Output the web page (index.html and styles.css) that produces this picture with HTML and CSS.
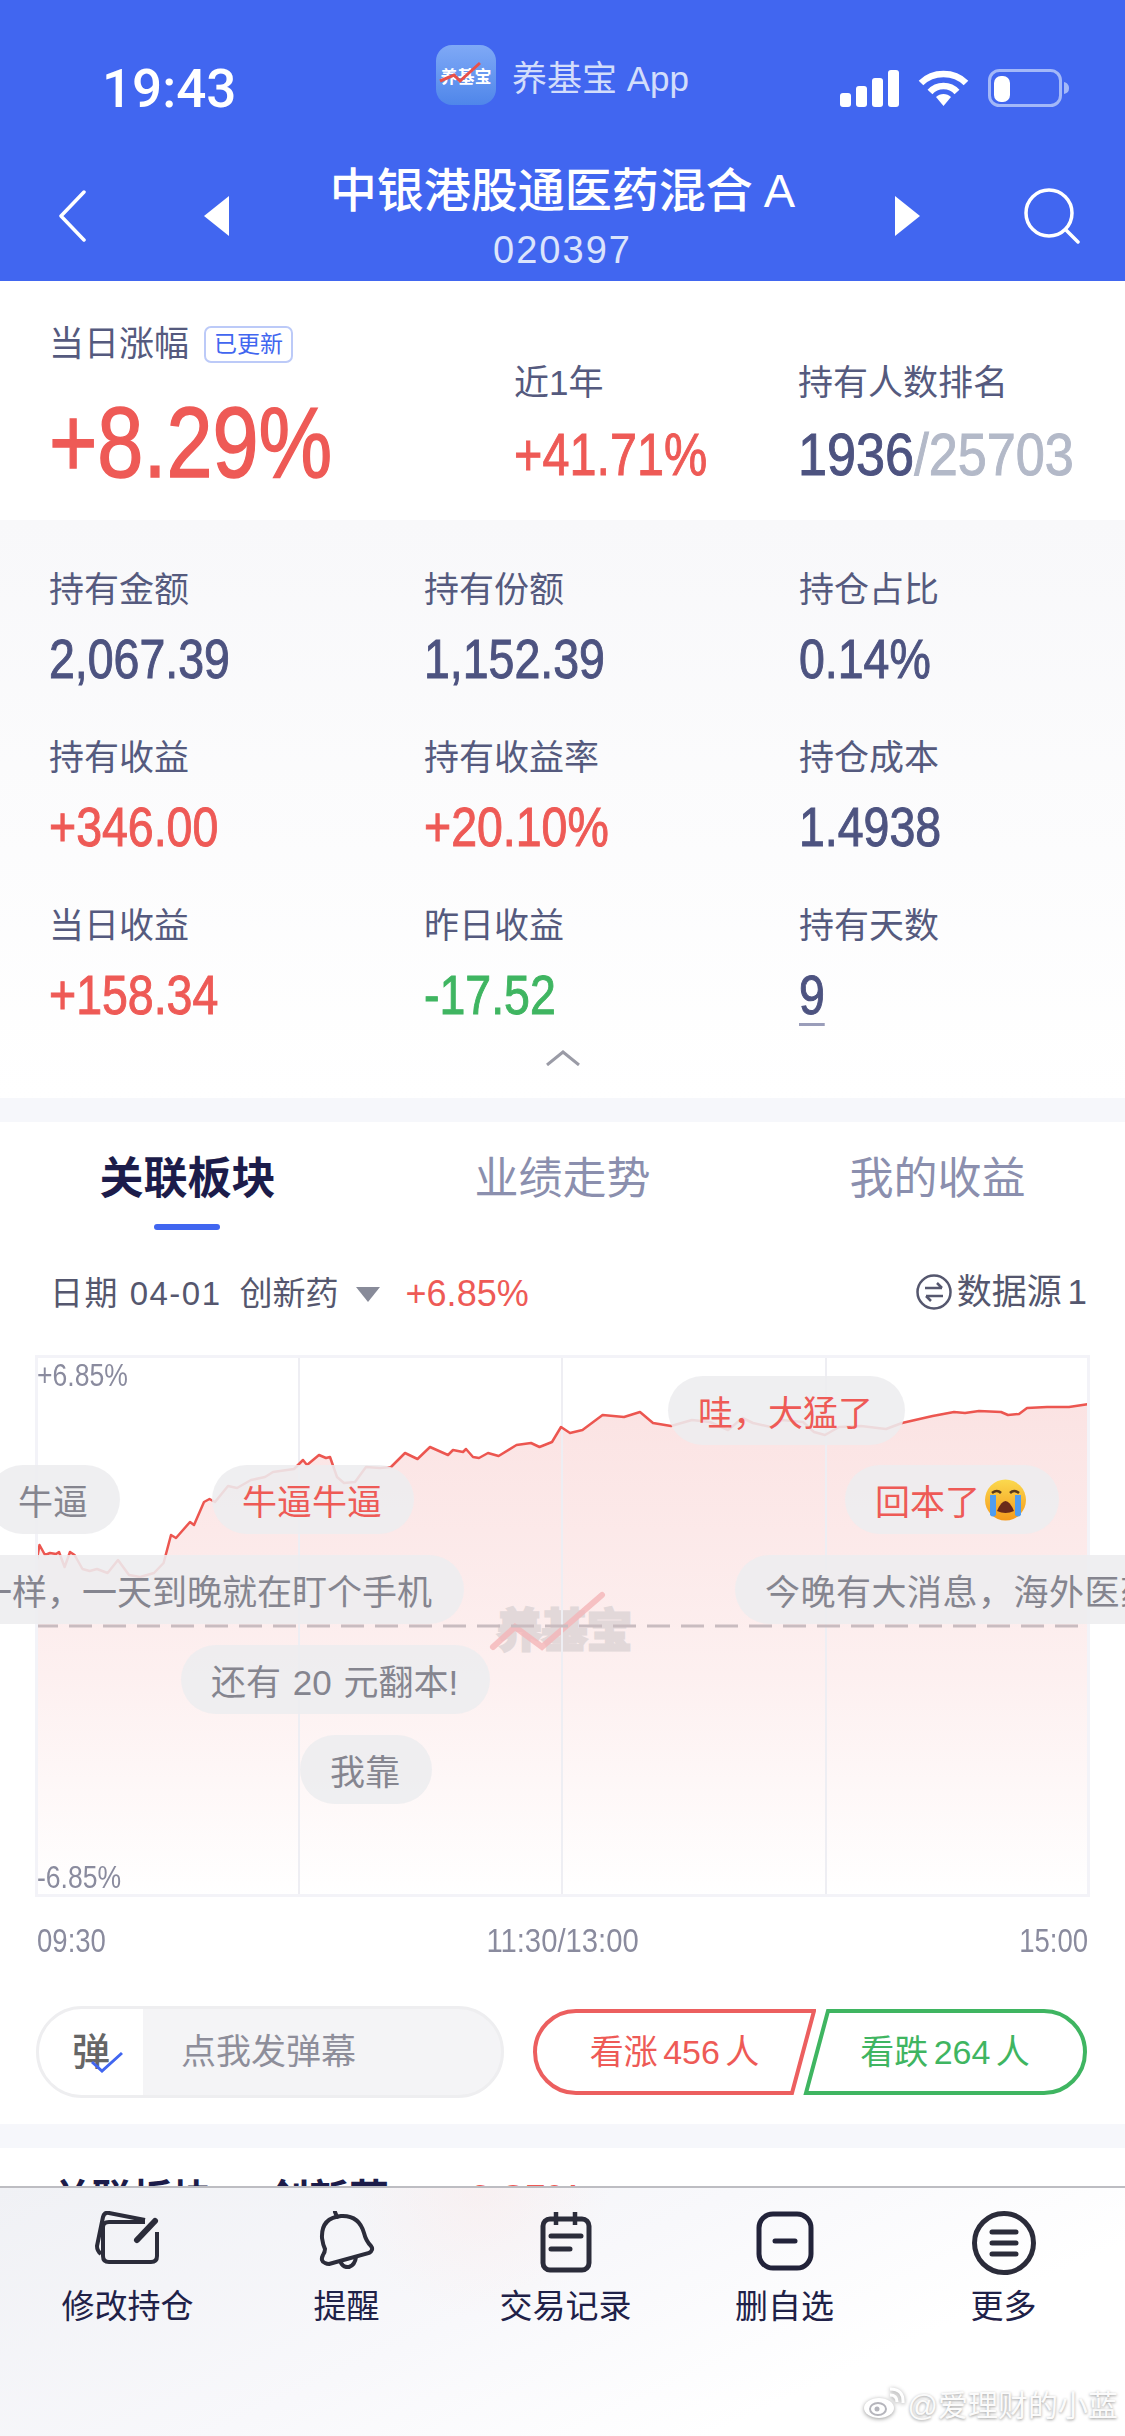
FILE: index.html
```html
<!DOCTYPE html>
<html lang="zh-CN">
<head>
    <meta charset="UTF-8">
    <meta name="viewport" content="width=device-width, initial-scale=1.0">
    <title>中银港股通医药混合 A</title>
    <link rel="stylesheet" href="styles.css">
</head>
<body>
<div class="page">
    <header class="header">
        <div class="status">
            <div class="time">19:43</div>
            <div class="app">
                <div class="app-logo">
                    <span>养基宝</span>
                    <svg class="app-slash" width="60" height="60" viewBox="0 0 60 60"><path d="M4 36 L18 30 L24 36 L44 18" fill="none" stroke="#e8504a" stroke-width="3"/></svg>
                </div>
                <div class="app-name">养基宝 App</div>
            </div>
            <div class="status-icons">
                <svg width="59" height="37" viewBox="0 0 59 37"><rect x="0" y="23" width="11" height="14" rx="3" fill="#fff"/><rect x="16" y="16" width="11" height="21" rx="3" fill="#fff"/><rect x="32" y="8" width="11" height="29" rx="3" fill="#fff"/><rect x="48" y="0" width="11" height="37" rx="3" fill="#fff"/></svg>
                <svg width="51" height="37" viewBox="0 0 51 37"><path d="M3 13 C15 1 36 1 48 13" fill="none" stroke="#fff" stroke-width="6.500"/><path d="M12 22 C19 14 32 14 39 22" fill="none" stroke="#fff" stroke-width="6.500"/><path d="M18 27 C22 23 29 23 33 27 L25.500 36 Z" fill="#fff"/></svg>
                <svg width="81" height="38" viewBox="0 0 81 38"><rect x="1.500" y="1.500" width="71" height="35" rx="10" fill="none" stroke="#a3b8f8" stroke-width="3"/><rect x="6" y="7" width="16" height="26" rx="7" fill="#fff"/><path d="M76 13 C80 14 81 17 81 19 C81 22 80 24 76 25 Z" fill="#a3b8f8"/></svg>
            </div>
        </div>
        <div class="nav">
            <div class="nav-side">
                <svg class="nav-back" width="30" height="52" viewBox="0 0 30 52"><path d="M27 2 L4 26 L27 50" fill="none" stroke="#fff" stroke-width="3.500" stroke-linecap="round" stroke-linejoin="round"/></svg>
                <svg width="25" height="40" viewBox="0 0 25 40"><path d="M25 0 V40 L0 20 Z" fill="#fff"/></svg>
            </div>
            <div class="nav-title">
                <div class="fund-name">中银港股通医药混合 A</div>
                <div class="fund-code">020397</div>
            </div>
            <div class="nav-side nav-side-right">
                <svg width="25" height="40" viewBox="0 0 25 40"><path d="M0 0 V40 L25 20 Z" fill="#fff"/></svg>
                <svg width="56" height="56" viewBox="0 0 56 56"><circle cx="25" cy="25" r="23" fill="none" stroke="#fff" stroke-width="3.500"/><path d="M42 42 L54 54" fill="none" stroke="#fff" stroke-width="3.500" stroke-linecap="round"/></svg>
            </div>
        </div>
    </header>

    <section class="summary">
        <div class="summary-main">
            <div class="label">当日涨幅<span class="tag">已更新</span></div>
            <div class="num big red">+8.29%</div>
        </div>
        <div class="summary-year">
            <div class="label">近1年</div>
            <div class="num mid red">+41.71%</div>
        </div>
        <div class="summary-rank">
            <div class="label">持有人数排名</div>
            <div class="num mid rank">1936<span class="rank-total">/25703</span></div>
        </div>
    </section>

    <section class="stats">
        <div class="stats-grid">
            <div><div class="label">持有金额</div><div class="num val">2,067.39</div></div>
            <div><div class="label">持有份额</div><div class="num val">1,152.39</div></div>
            <div><div class="label">持仓占比</div><div class="num val">0.14%</div></div>
            <div><div class="label">持有收益</div><div class="num val red">+346.00</div></div>
            <div><div class="label">持有收益率</div><div class="num val red">+20.10%</div></div>
            <div><div class="label">持仓成本</div><div class="num val">1.4938</div></div>
            <div><div class="label">当日收益</div><div class="num val red">+158.34</div></div>
            <div><div class="label">昨日收益</div><div class="num val green">-17.52</div></div>
            <div><div class="label">持有天数</div><div class="num val"><span class="days">9</span></div></div>
        </div>
        <svg class="collapse" width="36" height="16" viewBox="0 0 36 16"><path d="M2 15 L18 2 L34 15" fill="none" stroke="#9a9ba6" stroke-width="3"/></svg>
    </section>

    <div class="band"></div>

    <section class="board">
        <div class="tabs">
            <div class="tab tab-on">关联板块</div>
            <div class="tab">业绩走势</div>
            <div class="tab">我的收益</div>
        </div>
        <div class="filter">
            <span class="filter-date">日期 04-01</span>
            <span class="filter-name">创新药</span>
            <span class="filter-arrow"></span>
            <span class="filter-pct">+6.85%</span>
            <span class="source">
                <svg width="36" height="36" viewBox="0 0 36 36"><circle cx="18" cy="18" r="16.500" fill="none" stroke="#55576e" stroke-width="2.500"/><path d="M9 14 H26 M21 9 L26 14 M27 22 H10 M15 27 L10 22" fill="none" stroke="#55576e" stroke-width="2.500"/></svg>
                数据源 1
            </span>
        </div>
        <div class="chart-wrap">
            <div class="chart">
                <svg width="1055" height="542" viewBox="0 0 1055 542">
                    <defs>
                        <linearGradient id="area" x1="0" y1="0" x2="0" y2="1">
                            <stop offset="0" stop-color="#fbe3e3"/>
                            <stop offset="0.55" stop-color="#fdf0f0"/>
                            <stop offset="1" stop-color="#ffffff"/>
                        </linearGradient>
                    </defs>
                    <path fill="url(#area)" d="M0 542 L0 215 L4.500 190 L10 200 L15 198 L21 199 L24 197 L29.600 212 L35 197 L39.600 200 L47.500 214 L54.700 216 L62 214 L72.600 218 L83 205 L94 220 L105 222 L119 218 L128.600 208 L136 180 L141 183 L155 167 L159 170 L169 147 L174.500 144 L180 147 L193 131 L202 133 L216 125 L230 122 L238 117 L259 114 L268 105 L272 110 L284 100 L291 103 L295 102 L302 122 L309 128 L320 127 L331 112 L345 113 L356 112 L370 98 L382.500 104 L395 92 L413 100 L418 95 L428 97 L431 94 L438 102 L444 103 L453 98 L463.600 101 L481.500 90 L496 88 L504.500 92 L517 87 L526 72 L535 78 L547.500 75 L567.600 60 L589 62 L605 57 L618 68 L636 71 L657 65 L675 67 L693 75 L707.500 63 L718 68 L736 72 L747 65 L768 67 L779 77 L790 80 L804 72 L826 71 L851 74 L867 68 L897.600 61 L919 57 L930 58 L944 56 L966 57 L973 60 L984 59 L992 53 L1012 52 L1034 52 L1054 49 L1054 542 Z"/>
                    <text class="mark" x="462" y="292">养基宝</text>
                    <path d="M458 292 L480 272 L507 292 L567 240" fill="none" stroke="#f4b5b8" stroke-opacity="0.8" stroke-width="6" stroke-linecap="round"/>
                    <path d="M264 0 V542 M527 0 V542 M791 0 V542" fill="none" stroke="#eeeef3" stroke-width="2"/>
                    <path d="M0 271 H1055" fill="none" stroke="#c9bcc0" stroke-width="3" stroke-dasharray="23 11"/>
                    <path fill="none" stroke="#ec5650" stroke-width="2.500" stroke-linejoin="round" d="M0 215 L4.500 190 L10 200 L15 198 L21 199 L24 197 L29.600 212 L35 197 L39.600 200 L47.500 214 L54.700 216 L62 214 L72.600 218 L83 205 L94 220 L105 222 L119 218 L128.600 208 L136 180 L141 183 L155 167 L159 170 L169 147 L174.500 144 L180 147 L193 131 L202 133 L216 125 L230 122 L238 117 L259 114 L268 105 L272 110 L284 100 L291 103 L295 102 L302 122 L309 128 L320 127 L331 112 L345 113 L356 112 L370 98 L382.500 104 L395 92 L413 100 L418 95 L428 97 L431 94 L438 102 L444 103 L453 98 L463.600 101 L481.500 90 L496 88 L504.500 92 L517 87 L526 72 L535 78 L547.500 75 L567.600 60 L589 62 L605 57 L618 68 L636 71 L657 65 L675 67 L693 75 L707.500 63 L718 68 L736 72 L747 65 L768 67 L779 77 L790 80 L804 72 L826 71 L851 74 L867 68 L897.600 61 L919 57 L930 58 L944 56 L966 57 L973 60 L984 59 L992 53 L1012 52 L1034 52 L1054 49"/>
                </svg>
            </div>
            <div class="num axis-y axis-top">+6.85%</div>
            <div class="num axis-y axis-bottom">-6.85%</div>
            <div class="dm dm-wa dm-red">哇，大猛了</div>
            <div class="dm dm-nb">牛逼</div>
            <div class="dm dm-nbnb dm-red">牛逼牛逼</div>
            <div class="dm dm-back dm-red">回本了
                <svg width="43" height="42" viewBox="0 0 43 42">
                    <defs><linearGradient id="face" x1="0" y1="0" x2="0" y2="1"><stop offset="0" stop-color="#fbd94e"/><stop offset="1" stop-color="#f59a1c"/></linearGradient></defs>
                    <circle cx="21.500" cy="21" r="20.500" fill="url(#face)"/>
                    <path d="M8 14 Q13 10 17 14 M26 14 Q30 10 35 14" fill="none" stroke="#5a3a1a" stroke-width="2.500"/>
                    <path d="M13 32 Q21.500 12 30 32 Q21.500 36 13 32 Z" fill="#6b2a1a"/>
                    <path d="M6 16 H12 V36 Q9 39 6 36 Z M31 16 H37 V36 Q34 39 31 36 Z" fill="#4f9df0"/>
                </svg>
            </div>
            <div class="dm dm-day">一样，一天到晚就在盯个手机</div>
            <div class="dm dm-news">今晚有大消息，海外医药</div>
            <div class="dm dm-left">还有 20 元翻本!</div>
            <div class="dm dm-wow">我靠</div>
        </div>
        <div class="axis-x">
            <span class="num tick tick-start">09:30</span>
            <span class="num tick tick-mid">11:30/13:00</span>
            <span class="num tick tick-end">15:00</span>
        </div>
        <div class="vote">
            <div class="barrage">
                <div class="barrage-key">
                    <span>弹</span>
                    <svg class="barrage-check" width="34" height="22" viewBox="0 0 34 22"><path d="M2 11 L12 20 L32 2" fill="none" stroke="#4166f0" stroke-width="3"/></svg>
                </div>
                <div class="barrage-text">点我发弹幕</div>
            </div>
            <div class="vote-btn vote-up">
                <svg width="283" height="86" viewBox="0 0 283 86"><path d="M43 2 H281 L259 84 H43 A41 41 0 0 1 43 2 Z" fill="none" stroke="#ec5f5f" stroke-width="4"/></svg>
                <span>看涨 456 人</span>
            </div>
            <div class="vote-btn vote-down">
                <svg width="284" height="86" viewBox="0 0 284 86"><path d="M25 2 H241 A41 41 0 0 1 241 84 H3 Z" fill="none" stroke="#3fb561" stroke-width="4"/></svg>
                <span>看跌 264 人</span>
            </div>
        </div>
    </section>

    <div class="band"></div>

    <section class="next">
        <span class="next-title">关联板块</span>
        <span class="next-name">创新药</span>
        <span class="next-pct">+6.85%</span>
    </section>

    <nav class="toolbar">
        <div class="tool">
            <svg width="66" height="54" viewBox="0 0 66 54"><path d="M62 21 V45 Q62 51 56 51 H14 Q8 51 8 45 V16 Q8 11 14 11 H50" fill="none" stroke="#2b2c3a" stroke-width="4"/><path d="M50 9 L14 2 Q9 1 8 6 L2 35 Q2 40 6 43" fill="none" stroke="#2b2c3a" stroke-width="4"/><path d="M42 29 L60 10" fill="none" stroke="#2b2c3a" stroke-width="6" stroke-linecap="round"/></svg>
            <span>修改持仓</span>
        </div>
        <div class="tool">
            <svg width="56" height="58" viewBox="0 0 56 58"><path d="M10 53 L50 42 Q55 39 52 35 Q47 30 45 22 Q40 4 22 5 Q2 7 3 27 Q4 34 6 38 Q6 41 4 44 Q1 50 6 52 Q8 53 10 53 Z" fill="none" stroke="#2b2c3a" stroke-width="4"/><path d="M21 50 Q24 57 30 56 Q36 54 37 46" fill="none" stroke="#2b2c3a" stroke-width="4"/><path d="M16 1 L18 6" fill="none" stroke="#2b2c3a" stroke-width="4" stroke-linecap="round"/></svg>
            <span>提醒</span>
        </div>
        <div class="tool">
            <svg width="52" height="62" viewBox="0 0 52 62"><rect x="3" y="8" width="46" height="51" rx="7" fill="none" stroke="#2b2c3a" stroke-width="5"/><path d="M16 1 V14 M35 1 V14" fill="none" stroke="#2b2c3a" stroke-width="4.500"/><path d="M11 25 H41 M11 38 H30" fill="none" stroke="#2b2c3a" stroke-width="5" stroke-linecap="round"/></svg>
            <span>交易记录</span>
        </div>
        <div class="tool">
            <svg width="58" height="60" viewBox="0 0 58 60"><rect x="3" y="3" width="52" height="54" rx="14" fill="none" stroke="#22233a" stroke-width="5"/><path d="M19 30 H39" fill="none" stroke="#22233a" stroke-width="5" stroke-linecap="round"/></svg>
            <span>删自选</span>
        </div>
        <div class="tool">
            <svg width="64" height="64" viewBox="0 0 64 64"><circle cx="32" cy="32" r="29.500" fill="none" stroke="#2b2c3a" stroke-width="5"/><path d="M20 21 H44 M20 32 H44 M20 43 H44" fill="none" stroke="#2b2c3a" stroke-width="5" stroke-linecap="round"/></svg>
            <span>更多</span>
        </div>
    </nav>

    <div class="weibo">
        <svg width="42" height="32" viewBox="0 0 42 32"><ellipse cx="16" cy="21" rx="15" ry="10" fill="#fff"/><ellipse cx="15" cy="22" rx="8" ry="6" fill="none" stroke="#b5b5bc" stroke-width="2"/><circle cx="14" cy="22" r="2.500" fill="#b5b5bc"/><path d="M27 2 Q41 2 40 16 M27 8 Q34 8 34 15" fill="none" stroke="#fff" stroke-width="3"/></svg>
        <span>@爱理财的小蓝</span>
    </div>
</div>
</body>
</html>
```

FILE: styles.css
```css
html, body {
    margin: 0;
    padding: 0;
}
body {
    font-family: "Liberation Sans", "Noto Sans CJK SC", sans-serif;
    background: #fff;
}
.page {
    position: relative;
    width: 1125px;
    height: 2436px;
    overflow: hidden;
    background: #fff;
}
svg {
    display: block;
}

/* header */
.header {
    height: 281px;
    box-sizing: border-box;
    padding-top: 45px;
    background: #4166f0;
    color: #fff;
}
.status {
    display: grid;
    grid-template-columns: 1fr auto 1fr;
    height: 62px;
    padding: 0 56px;
}
.time {
    align-self: end;
    margin-left: 46px;
    font-family: Roboto, sans-serif;
    font-size: 53px;
    font-weight: 500;
    line-height: 36px;
}
.app {
    display: flex;
    align-items: center;
    gap: 16px;
    height: 60px;
}
.app-logo {
    position: relative;
    width: 60px;
    height: 60px;
    border-radius: 16px;
    background: linear-gradient(#7fa9f6, #4f86ea);
    font-size: 17px;
    font-weight: 700;
    line-height: 66px;
    text-align: center;
    white-space: nowrap;
}
.app-slash {
    position: absolute;
    top: 0;
    left: 0;
}
.app-name {
    font-size: 35px;
    color: #d2ddfb;
}
.status-icons {
    display: flex;
    align-items: flex-end;
    justify-content: flex-end;
    gap: 19px;
}
.nav {
    display: grid;
    grid-template-columns: 1fr auto 1fr;
    align-items: start;
    padding: 56px 45px 0;
}
.nav-side {
    display: flex;
    align-items: center;
    gap: 117px;
    height: 62px;
    margin-top: 22px;
}
.nav-back {
    margin-left: 12px;
}
.nav-side-right {
    justify-content: flex-end;
    gap: 104px;
}
.nav-title {
    text-align: center;
}
.fund-name {
    font-size: 47px;
    font-weight: 500;
    line-height: 56px;
    white-space: nowrap;
    word-spacing: -2px;
}
.fund-code {
    font-size: 38px;
    line-height: 40px;
    margin-top: 11px;
    letter-spacing: 2px;
    color: #dbe4fc;
}

/* figures, drawn condensed since no DIN-like face is installed */
.num {
    font-family: "Liberation Sans", sans-serif;
    transform: scaleX(0.81);
    transform-origin: left center;
    white-space: nowrap;
}
.label {
    font-size: 35px;
    line-height: 36px;
    color: #555a7e;
    white-space: nowrap;
}
.red {
    color: #ee5a56;
}
.green {
    color: #3fb561;
}
.summary {
    display: flex;
    align-items: flex-start;
    height: 239px;
    box-sizing: border-box;
    padding: 45px 0 0 49px;
}
.summary-main {
    width: 465px;
}
.summary-year {
    width: 284px;
    padding-top: 39px;
}
.summary-rank {
    padding-top: 39px;
}
.tag {
    display: inline-block;
    box-sizing: border-box;
    height: 37px;
    margin-left: 15px;
    padding: 0 8px;
    border: 2px solid #bccaf8;
    border-radius: 7px;
    font-size: 23px;
    line-height: 33px;
    color: #4166f0;
    vertical-align: top;
}
.big {
    margin-top: 29px;
    font-size: 101px;
    line-height: 100px;
    -webkit-text-stroke: 1.500px currentColor;
    transform: scaleX(0.82);
}
.mid {
    margin-top: 24px;
    font-size: 60px;
    line-height: 60px;
    -webkit-text-stroke: 1px currentColor;
}
.rank {
    color: #4d5380;
    transform: scaleX(0.87);
}
.rank-total {
    color: #b3b9c8;
}
.stats {
    height: 578px;
    box-sizing: border-box;
    padding-top: 52px;
    background: linear-gradient(#f8f8fa, #ffffff);
}
.stats-grid {
    display: grid;
    grid-template-columns: repeat(3, 375px);
    grid-auto-rows: 116px;
    row-gap: 52px;
    padding-left: 49px;
}
.val {
    margin-top: 23px;
    font-size: 56px;
    line-height: 56px;
    color: #4d5380;
    -webkit-text-stroke: 1px currentColor;
    transform: scaleX(0.83);
}
.val.red {
    color: #ee5a56;
}
.val.green {
    color: #3fb561;
}
.days {
    display: inline-block;
    border-bottom: 3px solid #9a9dba;
    -webkit-text-stroke: 1px #4d5380;
}
.collapse {
    margin: 26px auto 0;
}
.band {
    height: 24px;
    background: #f6f7fb;
}

/* board */
.board {
    height: 1002px;
}
.tabs {
    display: grid;
    grid-template-columns: repeat(3, 375px);
    height: 108px;
    box-sizing: border-box;
    padding-top: 33px;
}
.tab {
    position: relative;
    font-size: 44px;
    line-height: 48px;
    text-align: center;
    color: #8b8fae;
}
.tab-on {
    font-weight: 700;
    color: #1c1c4a;
}
.tab-on::after {
    content: "";
    position: absolute;
    left: 154px;
    top: 69px;
    width: 66px;
    height: 6px;
    border-radius: 3px;
    background: #4166f0;
}
.filter {
    display: flex;
    align-items: center;
    height: 40px;
    margin-top: 44px;
    padding: 0 38px 0 50px;
    font-size: 33px;
    line-height: 40px;
    color: #55576e;
    white-space: nowrap;
}
.filter-date {
    letter-spacing: 1.500px;
}
.filter-name {
    margin-left: 18px;
}
.filter-arrow {
    width: 0;
    height: 0;
    margin: 0 26px 0 17px;
    border-style: solid;
    border-width: 15px 12px 0;
    border-color: #888b99 transparent transparent;
}
.filter-pct {
    font-size: 36px;
    color: #ee5a56;
}
.source {
    display: flex;
    align-items: center;
    gap: 5px;
    margin-left: auto;
    margin-top: -5px;
    font-size: 35px;
    word-spacing: -4px;
}

/* chart, danmaku pills lie over it */
.chart-wrap {
    position: relative;
    height: 542px;
    margin-top: 41px;
}
.chart {
    box-sizing: border-box;
    width: 1055px;
    height: 542px;
    margin-left: 35px;
    outline: 3px solid #f3f3f8;
    outline-offset: -3px;
}
.mark {
    font-size: 45px;
    font-weight: 700;
    fill: #e2d8d9;
    stroke: #e2d8d9;
    stroke-width: 3px;
}
.axis-y {
    position: absolute;
    left: 37px;
    font-size: 32px;
    line-height: 32px;
    color: #8a8b9e;
    transform: scaleX(0.83);
}
.axis-top {
    top: 4px;
}
.axis-bottom {
    top: 506px;
}
.dm {
    position: absolute;
    display: flex;
    align-items: center;
    gap: 4px;
    box-sizing: border-box;
    height: 69px;
    padding: 0 32px 0 30px;
    border-radius: 35px;
    background: rgba(237, 237, 239, 0.88);
    font-size: 35px;
    color: #85858f;
    white-space: nowrap;
}
.dm-red {
    color: #ee5a56;
}
.dm-wa {
    left: 668px;
    top: 21px;
}
.dm-nb {
    left: -12px;
    top: 110px;
}
.dm-nbnb {
    left: 212px;
    top: 110px;
}
.dm-back {
    left: 845px;
    top: 110px;
}
.dm-day {
    left: -53px;
    top: 200px;
}
.dm-news {
    left: 735px;
    top: 200px;
    letter-spacing: 0.500px;
}
.dm-left {
    left: 181px;
    top: 290px;
    word-spacing: 2px;
}
.dm-wow {
    left: 300px;
    top: 380px;
}
.axis-x {
    display: flex;
    justify-content: space-between;
    padding: 26px 37px 0;
}
.tick {
    display: inline-block;
    font-size: 34px;
    line-height: 34px;
    color: #8a8b9e;
}
.tick-mid {
    transform: scaleX(0.86);
    transform-origin: center;
}
.tick-end {
    transform-origin: right center;
}

/* vote row */
.vote {
    display: flex;
    align-items: center;
    height: 92px;
    margin-top: 49px;
    padding-left: 36px;
}
.barrage {
    display: flex;
    box-sizing: border-box;
    width: 468px;
    height: 92px;
    border: 3px solid #eeeef0;
    border-radius: 46px;
    background: #f4f4f6;
    overflow: hidden;
}
.barrage-key {
    position: relative;
    width: 104px;
    background: #fff;
    font-size: 38px;
    font-weight: 500;
    line-height: 86px;
    text-align: center;
    color: #666;
}
.barrage-check {
    position: absolute;
    left: 51px;
    top: 42px;
}
.barrage-text {
    margin-left: 38px;
    font-size: 35px;
    line-height: 86px;
    color: #8e8e9a;
}
.vote-btn {
    position: relative;
    display: flex;
    align-items: center;
    justify-content: center;
    height: 86px;
    font-size: 34px;
    line-height: 82px;
    word-spacing: -4px;
}
.vote-btn svg {
    position: absolute;
    top: 0;
    left: 0;
}
.vote-up {
    width: 283px;
    margin-left: 29px;
    color: #ee5a56;
}
.vote-down {
    width: 284px;
    margin-left: -13px;
    color: #3fb561;
}
.next {
    padding: 31px 0 0 52px;
    font-size: 40px;
    line-height: 40px;
    font-weight: 700;
    color: #1c1c4a;
    white-space: nowrap;
}
.next-name {
    margin-left: 46px;
}
.next-pct {
    margin-left: 45px;
    color: #ee5a56;
}

/* bottom toolbar */
.toolbar {
    position: absolute;
    left: 0;
    right: 0;
    bottom: 0;
    display: grid;
    grid-template-columns: repeat(5, 219px);
    height: 250px;
    box-sizing: border-box;
    padding: 23px 0 0 18px;
    border-top: 2px solid #bdbdc2;
    background:
        radial-gradient(circle at 480px 0, rgba(252, 232, 230, 0.4), rgba(252, 232, 230, 0) 130px),
        linear-gradient(155deg, #f0f1f5, #f8f8fb 45%, #ffffff 75%);
}
.tool {
    display: flex;
    flex-direction: column;
    align-items: center;
    height: 114px;
    justify-content: space-between;
    font-size: 33px;
    line-height: 36px;
    color: #1f2148;
}
.weibo {
    position: absolute;
    right: 7px;
    bottom: 11px;
    display: flex;
    align-items: center;
    gap: 3px;
    font-size: 30px;
    color: #fbfbfb;
    text-shadow: 0 1px 3px rgba(0, 0, 0, 0.4);
}
.weibo svg {
    filter: drop-shadow(0 1px 2px rgba(0, 0, 0, 0.4));
}
```
